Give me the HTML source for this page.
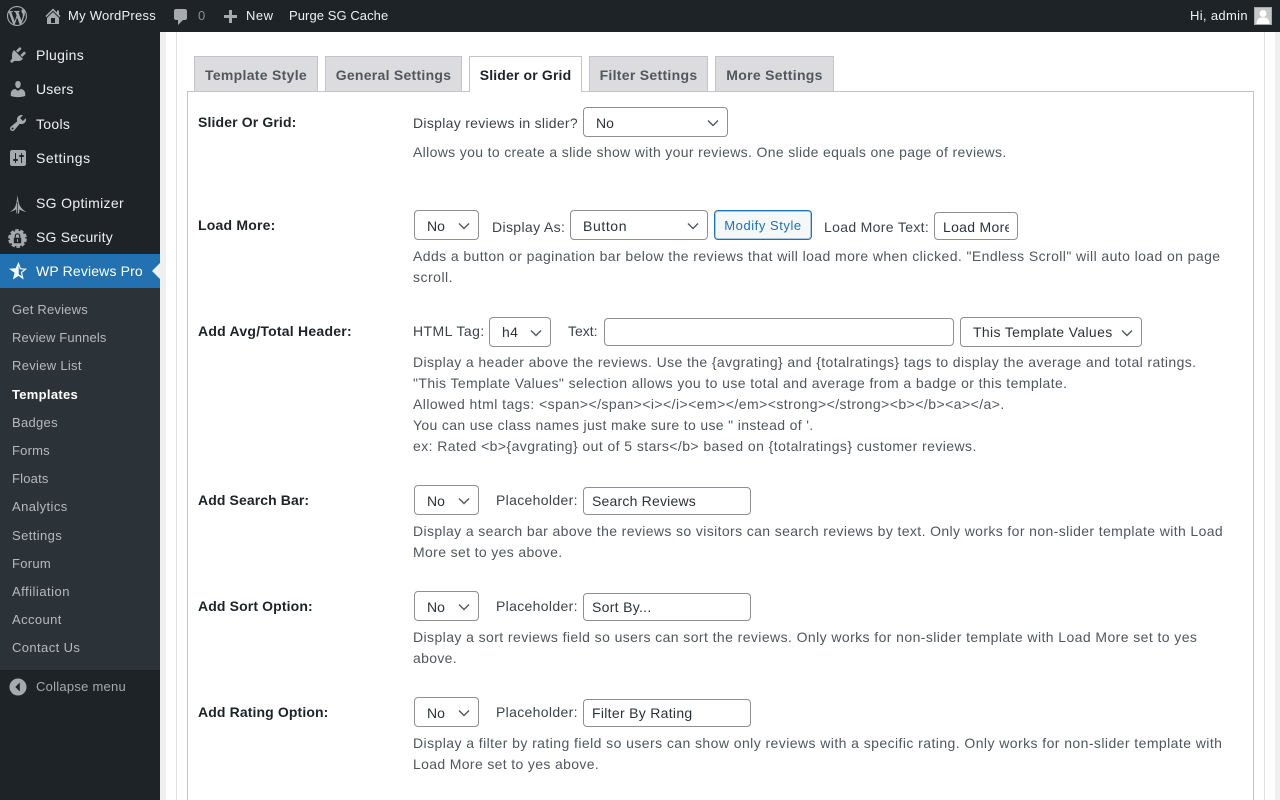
<!DOCTYPE html>
<html>
<head>
<meta charset="utf-8">
<style>
html,body{margin:0;padding:0;width:1280px;height:800px;overflow:hidden;background:#fff}
body{font-family:"Liberation Sans",sans-serif;font-size:14px;color:#50575e;position:relative}
.t{position:absolute;white-space:nowrap;line-height:20px}
.bar{position:absolute;left:0;top:0;width:1280px;height:32px;background:#1d2327}
.side{position:absolute;left:0;top:32px;width:160px;height:768px;background:#1d2327}
.sub{position:absolute;left:0;top:288px;width:160px;height:382px;background:#2c3338}
.act{position:absolute;left:0;top:254px;width:160px;height:34px;background:#2271b1}
.m{color:#f0f0f1;font-size:14px;left:36px}
.s{color:#b4b9be;font-size:13px;left:12px}
.b{color:#f0f0f1;font-size:13px}
.i{position:absolute;fill:#a7aaad}
.tab{position:absolute;top:56px;height:35px;background:#dcdcde;border:1px solid #c3c4c7;border-bottom:none;box-sizing:border-box;text-align:center;font-weight:bold;color:#50575e;line-height:37px;font-size:14px;white-space:nowrap}
.sel,.inp{position:absolute;box-sizing:border-box;height:30px;background:#fff;border:1px solid #8c8f94;border-radius:4px;color:#2c3338;font-size:14px;line-height:30px;padding-left:12px;white-space:nowrap;overflow:hidden}
.inp{padding-left:8px}
.sel svg{position:absolute;right:7px;top:10px}
.l{font-weight:bold;color:#1d2327;left:198px}
.c{color:#3c434a}
.d{color:#50575e;left:413px}
</style>
</head>
<body>
<!-- backgrounds -->
<div style="position:absolute;left:160px;top:32px;width:6px;height:768px;background:#f0f0f1"></div>
<div style="position:absolute;left:176px;top:32px;width:1px;height:768px;background:#e0e0e0"></div>
<div style="position:absolute;left:1264px;top:32px;width:1px;height:768px;background:#e0e0e0"></div>
<div style="position:absolute;left:1275px;top:32px;width:5px;height:768px;background:#f0f0f1"></div>

<!-- admin bar -->
<div class="bar"></div>
<svg class="i" style="left:7px;top:6px" width="20" height="20" viewBox="0 0 20 20"><path d="M20 10c0-5.510-4.490-10-10-10C4.480 0 0 4.490 0 10c0 5.520 4.480 10 10 10 5.510 0 10-4.480 10-10zM7.780 15.370L4.370 6.220c.55-.02 1.170-.08 1.170-.08.5-.06.44-1.130-.06-1.110 0 0-1.450.11-2.370.11-.18 0-.37 0-.58-.01C4.120 2.690 6.870 1.110 10 1.110c2.330 0 4.450.87 6.050 2.340-.68-.11-1.650.39-1.650 1.580 0 .74.45 1.360.9 2.100.35.61.55 1.360.55 2.460 0 1.490-1.400 5-1.400 5l-3.030-8.370c.54-.02.82-.17.82-.17.5-.05.44-1.250-.06-1.220 0 0-1.440.12-2.380.12-.87 0-2.330-.12-2.330-.12-.5-.03-.56 1.200-.06 1.220l.92.08 1.260 3.410zM17.410 10c.24-.64.74-1.870.43-4.250.7 1.290 1.050 2.710 1.050 4.250 0 3.290-1.730 6.240-4.400 7.780.97-2.590 1.940-5.210 2.920-7.780zM6.100 18.090C3.120 16.640 1.110 13.530 1.110 10c0-1.300.23-2.480.72-3.590C3.250 10.300 4.670 14.200 6.100 18.090zm4.030-6.630l2.580 6.980c-.86.29-1.760.45-2.710.45-.79 0-1.570-.11-2.290-.33.81-2.380 1.630-4.740 2.420-7.100z"/></svg>
<svg class="i" style="left:43px;top:6px" width="20" height="20" viewBox="0 0 20 20"><path d="M16 8.500l1.530 1.530-1.060 1.060L10 4.620l-6.470 6.470-1.060-1.060L10 2.500l4 4v-2h2v4zm-6-2.460l6 5.990V18H4v-5.970zM12 17v-5H8v5h4z"/></svg>
<div class="t b" style="left:68px;top:6px;letter-spacing:.25px">My WordPress</div>
<svg class="i" style="left:171px;top:7px" width="20" height="20" viewBox="0 0 20 20"><path d="M5 2h9c1.100 0 2 .9 2 2v7c0 1.100-.9 2-2 2h-2l-5 5v-5H5c-1.100 0-2-.9-2-2V4c0-1.100.9-2 2-2z"/></svg>
<div class="t" style="left:198px;top:6px;font-size:13px;color:#8c8f94">0</div>
<svg class="i" style="left:220px;top:8px" width="20" height="20" viewBox="0 0 20 20"><path d="M17 7v3h-5v5H9v-5H4V7h5V2h3v5h5z"/></svg>
<div class="t b" style="left:246px;top:6px;letter-spacing:.5px">New</div>
<div class="t b" style="left:289px;top:6px;letter-spacing:.07px">Purge SG Cache</div>
<div class="t b" style="left:1190px;top:6px;letter-spacing:.33px">Hi, admin</div>
<svg style="position:absolute;left:1254px;top:7px" width="18" height="18" viewBox="0 0 18 18"><rect width="18" height="18" fill="#a7aaad"/><rect x="1" y="1" width="16" height="16" fill="#c8c8c8"/><circle cx="9" cy="6.500" r="3.500" fill="#fff"/><path d="M2.500 17c0-4 2-6 4.500-6.500h4c2.500.5 4.500 2.500 4.500 6.500z" fill="#fff"/></svg>

<!-- sidebar -->
<div class="side"></div>
<div class="act"></div>
<div class="sub"></div>
<svg style="position:absolute;left:152px;top:263px" width="8" height="16" viewBox="0 0 8 16"><path d="M8 0v16L0 8z" fill="#f0f0f1"/></svg>

<svg class="i" style="left:8px;top:45px" width="20" height="20" viewBox="0 0 20 20"><path d="M13.110 4.360L9.870 7.600 8 5.730l3.240-3.240c.35-.34 1.050-.2 1.560.32.52.51.66 1.210.31 1.550zm-8 1.770l.91-1.120 9.010 9.010-1.190.84c-.71.71-2.630 1.160-3.820 1.160H6.140L4.900 17.260c-.59.59-1.540.59-2.120 0-.59-.58-.59-1.530 0-2.120l1.240-1.240v-3.880c0-1.130.4-3.010 1.090-3.890zm7.260 3.970l3.240-3.240c.34-.35 1.040-.21 1.550.31.52.51.66 1.210.31 1.550l-3.240 3.250z"/></svg>
<svg class="i" style="left:8px;top:79px" width="20" height="20" viewBox="0 0 20 20"><path d="M10 9.250c-2.270 0-2.730-3.440-2.730-3.440C7 4.020 7.820 2 9.970 2c2.160 0 2.980 2.020 2.710 3.810 0 0-.41 3.440-2.680 3.440zm0 2.570L12.720 10c2.390 0 4.520 2.330 4.520 4.530v2.490s-3.650 1.130-7.240 1.130c-3.650 0-7.240-1.130-7.240-1.130v-2.490c0-2.250 1.940-4.480 4.470-4.480z"/></svg>
<svg class="i" style="left:8px;top:113px" width="20" height="20" viewBox="0 0 20 20"><path d="M16.680 9.770c-1.340 1.340-3.300 1.670-4.950.99l-5.410 6.520c-.99.99-2.590.99-3.570 0-.99-.98-.99-2.580 0-3.570l6.520-5.420c-.68-1.650-.35-3.610.99-4.950 1.280-1.280 3.120-1.620 4.720-1.060l-2.890 2.890 2.820 2.820 2.860-2.870c.53 1.580.18 3.390-1.090 4.650zM3.810 16.210c.4.39 1.040.39 1.430 0 .4-.4.4-1.040 0-1.430-.39-.4-1.030-.4-1.430 0-.39.39-.39 1.030 0 1.430z"/></svg>
<svg class="i" style="left:8px;top:148px" width="20" height="20" viewBox="0 0 20 20"><path d="M18 16V4c0-1.100-.9-2-2-2H4c-1.100 0-2 .9-2 2v12c0 1.100.9 2 2 2h12c1.100 0 2-.9 2-2zM8 11h1c.55 0 1 .45 1 1s-.45 1-1 1H8v1.500c0 .28-.22.5-.5.5s-.5-.22-.5-.5V13H6c-.55 0-1-.45-1-1s.45-1 1-1h1V5.500c0-.28.22-.5.5-.5s.5.22.5.5V11zm5-2h-1c-.55 0-1-.45-1-1s.45-1 1-1h1V5.500c0-.28.22-.5.5-.5s.5.22.5.5V7h1c.55 0 1 .45 1 1s-.45 1-1 1h-1v5.500c0 .28-.22.5-.5.5s-.5-.22-.5-.5V9z"/></svg>
<svg style="position:absolute;left:9px;top:194px" width="18" height="20" viewBox="0 0 18 20"><path d="M8.500 1c.6 4 .9 8 2.500 11 1.500 2.500 3.500 4.500 6.500 6-3-.6-5.500-1.500-7-2.800L10 19.500H7.500l-.4-4.200C5.500 16.500 3 17.500 .5 18c3-1.500 5-3.500 6-6 1.200-3 1.500-7 2-11z" fill="#a7aaad"/><path d="M8.500 8v11.500" stroke="#1d2327" stroke-width=".7"/></svg>
<svg style="position:absolute;left:8px;top:229px" width="19" height="19" viewBox="0 0 19 19"><circle cx="9.500" cy="9.500" r="7.800" fill="#a7aaad"/><circle cx="9.500" cy="9.500" r="8.500" fill="none" stroke="#a7aaad" stroke-width="1.800" stroke-dasharray="3.600 1.740"/><rect x="5.800" y="8.700" width="7.400" height="5.600" rx=".5" fill="#1d2327"/><path d="M7.300 8.700V7a2.200 2.200 0 0 1 4.400 0v1.700" fill="none" stroke="#1d2327" stroke-width="1.200"/><rect x="9" y="10.200" width="1" height="2.600" fill="#a7aaad"/></svg>
<svg style="position:absolute;left:9px;top:262px" width="18" height="18" viewBox="0 0 18 18"><path d="M9.500 0l2.300 6.300 6.200.4-4.900 4.100 1.600 6.700-5.200-3.600-5.600 3.600 1.700-6.700L0 6.700l6.700-.4z" fill="#fff"/><path d="M9.700 3.700l1.300 3.600 4 .3-3.200 2.700 1 4-3.100-2.100z" fill="#2271b1"/></svg>

<div class="t m" style="top:45px;letter-spacing:.3px">Plugins</div>
<div class="t m" style="top:79px;letter-spacing:.2px">Users</div>
<div class="t m" style="top:114px;letter-spacing:.3px">Tools</div>
<div class="t m" style="top:148px;letter-spacing:.5px">Settings</div>
<div class="t m" style="top:193px;letter-spacing:.33px">SG Optimizer</div>
<div class="t m" style="top:227px;letter-spacing:.2px">SG Security</div>
<div class="t m" style="top:261px;color:#fff;letter-spacing:.15px">WP Reviews Pro</div>

<div class="t s" style="top:300px;letter-spacing:.2px">Get Reviews</div>
<div class="t s" style="top:328px;letter-spacing:.15px">Review Funnels</div>
<div class="t s" style="top:356px;letter-spacing:.3px">Review List</div>
<div class="t s" style="top:385px;color:#fff;font-weight:bold;letter-spacing:.3px">Templates</div>
<div class="t s" style="top:413px;letter-spacing:.3px">Badges</div>
<div class="t s" style="top:441px;letter-spacing:.2px">Forms</div>
<div class="t s" style="top:469px;letter-spacing:.2px">Floats</div>
<div class="t s" style="top:497px;letter-spacing:.4px">Analytics</div>
<div class="t s" style="top:526px;letter-spacing:.4px">Settings</div>
<div class="t s" style="top:554px;letter-spacing:.3px">Forum</div>
<div class="t s" style="top:582px;letter-spacing:.5px">Affiliation</div>
<div class="t s" style="top:610px;letter-spacing:.4px">Account</div>
<div class="t s" style="top:638px;letter-spacing:.4px">Contact Us</div>
<svg class="i" style="left:9px;top:678px" width="18" height="18" viewBox="0 0 20 20"><path d="M10 .5c5.240 0 9.500 4.260 9.500 9.500s-4.260 9.500-9.500 9.500S.5 15.240.5 10 4.760.5 10 .5zm2 4.500-5 5 5 5V5z"/></svg>
<div class="t" style="left:36px;top:677px;font-size:13px;color:#a7aaad;letter-spacing:.25px">Collapse menu</div>

<!-- tabs -->
<div style="position:absolute;left:187px;top:91px;width:1067px;height:720px;box-sizing:border-box;border:1px solid #c3c4c7;background:#fff"></div>
<div class="tab" style="left:194px;width:124px;letter-spacing:.3px">Template Style</div>
<div class="tab" style="left:325px;width:137px;letter-spacing:.27px">General Settings</div>
<div class="tab" style="left:469px;width:113px;height:36px;background:#fff;color:#1d2327;letter-spacing:.15px">Slider or Grid</div>
<div class="tab" style="left:589px;width:119px;letter-spacing:.3px">Filter Settings</div>
<div class="tab" style="left:715px;width:119px;letter-spacing:.3px">More Settings</div>

<!-- rows -->
<div class="t l" style="top:112px;letter-spacing:.13px">Slider Or Grid:</div>
<div class="t c" style="left:413px;top:113px;letter-spacing:.3px">Display reviews in slider?</div>
<div class="sel" style="left:583px;top:107px;width:145px">No<svg width="14" height="10" viewBox="0 0 14 10"><path d="M2 2.500l5 5 5-5" fill="none" stroke="#50575e" stroke-width="1.400"/></svg></div>
<div class="t d" style="top:142px;letter-spacing:.344px">Allows you to create a slide show with your reviews. One slide equals one page of reviews.</div>

<div class="t l" style="top:215px;letter-spacing:.2px">Load More:</div>
<div class="sel" style="left:414px;top:210px;width:65px">No<svg width="14" height="10" viewBox="0 0 14 10"><path d="M2 2.500l5 5 5-5" fill="none" stroke="#50575e" stroke-width="1.400"/></svg></div>
<div class="t c" style="left:492px;top:217px;letter-spacing:.36px">Display As:</div>
<div class="sel" style="left:570px;top:210px;width:138px;letter-spacing:.6px">Button<svg width="14" height="10" viewBox="0 0 14 10"><path d="M2 2.500l5 5 5-5" fill="none" stroke="#50575e" stroke-width="1.400"/></svg></div>
<div class="sel" style="left:714px;top:210px;width:98px;background:#f6f7f7;border-color:#2271b1;color:#2271b1;font-size:13px;text-align:center;padding:0;letter-spacing:.55px;box-shadow:0 0 0 1px #a9c9e2 inset">Modify Style</div>
<div class="t c" style="left:824px;top:217px;letter-spacing:.33px">Load More Text:</div>
<div class="inp" style="left:934px;top:212px;width:84px;height:28px;line-height:28px;padding:0"><div style="position:absolute;left:8px;top:0;width:66px;height:26px;overflow:hidden;letter-spacing:.3px">Load More</div></div>
<div class="t d" style="top:246px;letter-spacing:.41px">Adds a button or pagination bar below the reviews that will load more when clicked. "Endless Scroll" will auto load on page</div>
<div class="t d" style="top:267px;letter-spacing:.5px">scroll.</div>

<div class="t l" style="top:321px;letter-spacing:.24px">Add Avg/Total Header:</div>
<div class="t c" style="left:413px;top:321px;letter-spacing:.45px">HTML Tag:</div>
<div class="sel" style="left:489px;top:317px;width:62px;line-height:28px;letter-spacing:.3px">h4<svg width="14" height="10" viewBox="0 0 14 10"><path d="M2 2.500l5 5 5-5" fill="none" stroke="#50575e" stroke-width="1.400"/></svg></div>
<div class="t c" style="left:568px;top:321px">Text:</div>
<div class="inp" style="left:604px;top:318px;width:350px;height:28px"></div>
<div class="sel" style="left:960px;top:317px;width:182px;line-height:28px;letter-spacing:.35px">This Template Values<svg width="14" height="10" viewBox="0 0 14 10"><path d="M2 2.500l5 5 5-5" fill="none" stroke="#50575e" stroke-width="1.400"/></svg></div>
<div class="t d" style="top:352px;letter-spacing:.39px">Display a header above the reviews. Use the {avgrating} and {totalratings} tags to display the average and total ratings.</div>
<div class="t d" style="top:373px;letter-spacing:.4px">"This Template Values" selection allows you to use total and average from a badge or this template.</div>
<div class="t d" style="top:394px;letter-spacing:.45px">Allowed html tags: &lt;span&gt;&lt;/span&gt;&lt;i&gt;&lt;/i&gt;&lt;em&gt;&lt;/em&gt;&lt;strong&gt;&lt;/strong&gt;&lt;b&gt;&lt;/b&gt;&lt;a&gt;&lt;/a&gt;.</div>
<div class="t d" style="top:415px;letter-spacing:.35px">You can use class names just make sure to use " instead of '.</div>
<div class="t d" style="top:436px;letter-spacing:.425px">ex: Rated &lt;b&gt;{avgrating} out of 5 stars&lt;/b&gt; based on {totalratings} customer reviews.</div>

<div class="t l" style="top:490px;letter-spacing:.1px">Add Search Bar:</div>
<div class="sel" style="left:414px;top:485px;width:65px">No<svg width="14" height="10" viewBox="0 0 14 10"><path d="M2 2.500l5 5 5-5" fill="none" stroke="#50575e" stroke-width="1.400"/></svg></div>
<div class="t c" style="left:496px;top:490px;letter-spacing:.33px">Placeholder:</div>
<div class="inp" style="left:583px;top:487px;width:168px;height:28px;line-height:26px;letter-spacing:.2px">Search Reviews</div>
<div class="t d" style="top:521px;letter-spacing:.38px">Display a search bar above the reviews so visitors can search reviews by text. Only works for non-slider template with Load</div>
<div class="t d" style="top:542px;letter-spacing:.36px">More set to yes above.</div>

<div class="t l" style="top:596px;letter-spacing:.13px">Add Sort Option:</div>
<div class="sel" style="left:414px;top:591px;width:65px">No<svg width="14" height="10" viewBox="0 0 14 10"><path d="M2 2.500l5 5 5-5" fill="none" stroke="#50575e" stroke-width="1.400"/></svg></div>
<div class="t c" style="left:496px;top:596px;letter-spacing:.33px">Placeholder:</div>
<div class="inp" style="left:583px;top:593px;width:168px;height:28px;line-height:26px;letter-spacing:.3px">Sort By...</div>
<div class="t d" style="top:627px;letter-spacing:.415px">Display a sort reviews field so users can sort the reviews. Only works for non-slider template with Load More set to yes</div>
<div class="t d" style="top:648px;letter-spacing:.33px">above.</div>

<div class="t l" style="top:702px;letter-spacing:.12px">Add Rating Option:</div>
<div class="sel" style="left:414px;top:697px;width:65px">No<svg width="14" height="10" viewBox="0 0 14 10"><path d="M2 2.500l5 5 5-5" fill="none" stroke="#50575e" stroke-width="1.400"/></svg></div>
<div class="t c" style="left:496px;top:702px;letter-spacing:.33px">Placeholder:</div>
<div class="inp" style="left:583px;top:699px;width:168px;height:28px;line-height:26px;letter-spacing:.3px">Filter By Rating</div>
<div class="t d" style="top:733px;letter-spacing:.43px">Display a filter by rating field so users can show only reviews with a specific rating. Only works for non-slider template with</div>
<div class="t d" style="top:754px;letter-spacing:.35px">Load More set to yes above.</div>
</body>
</html>
